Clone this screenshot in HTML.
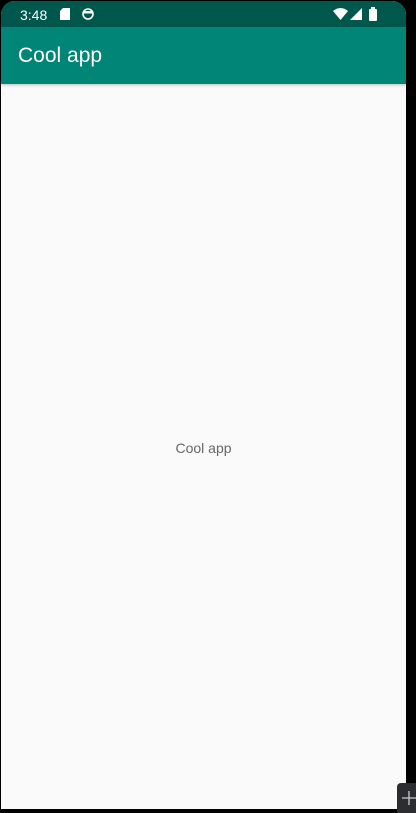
<!DOCTYPE html>
<html><head><style>
html,body{margin:0;width:416px;height:813px;overflow:hidden}
body{background:#000;position:relative;font-family:"Liberation Sans",sans-serif}
.scr{position:absolute;left:1px;top:1px;width:405px;height:808px;background:#fafafa;border-radius:14px 14px 0 0;overflow:hidden}
.sb{position:absolute;left:0;top:0;width:100%;height:26px;background:#00574b;color:#fff;font-size:14px}
.ab{position:absolute;left:0;top:26px;width:100%;height:57px;background:#008577;box-shadow:0 1px 3px rgba(0,0,0,.25)}
.ab span{position:absolute;left:17px;top:17px;color:#fff;font-size:21px}
.c{position:absolute;top:439px;left:0;width:100%;text-align:center;color:#666;font-size:14px}
.btn{position:absolute;left:397px;top:783px;width:19px;height:30px;background:#2b2d30;border-radius:4px 0 0 0}
</style></head><body>
<div class="scr">
<div class="sb"><span style="position:absolute;left:19px;top:6px">3:48</span>
<svg style="position:absolute;left:59px;top:7px" width="10" height="12"><path d="M3 0h7v12H0V3z" fill="#fff"/></svg>
<svg style="position:absolute;left:81px;top:7px" width="12" height="12"><circle cx="6" cy="6" r="5" fill="none" stroke="#fff" stroke-width="1.6"/><path d="M2 3h8v2.5H2z" fill="#fff"/></svg>
<svg style="position:absolute;left:332px;top:7px" width="15" height="12"><path d="M0 3Q7.5-3 15 3L7.5 12z" fill="#fff"/></svg>
<svg style="position:absolute;left:349px;top:7px" width="12" height="12"><path d="M12 0V12H0z" fill="#fff"/></svg>
<svg style="position:absolute;left:368px;top:6px" width="8" height="14"><rect x="0" y="2" width="8" height="12" rx="1" fill="#fff"/><rect x="2" y="0" width="4" height="3" fill="#fff"/></svg>
</div>
<div class="ab"><span>Cool app</span></div>
<div class="c">Cool app</div>
</div>
<div class="btn"><svg width="19" height="30"><path d="M12 8v14M5 15h14" stroke="#ccc" stroke-width="1.3"/></svg></div>
</body></html>
